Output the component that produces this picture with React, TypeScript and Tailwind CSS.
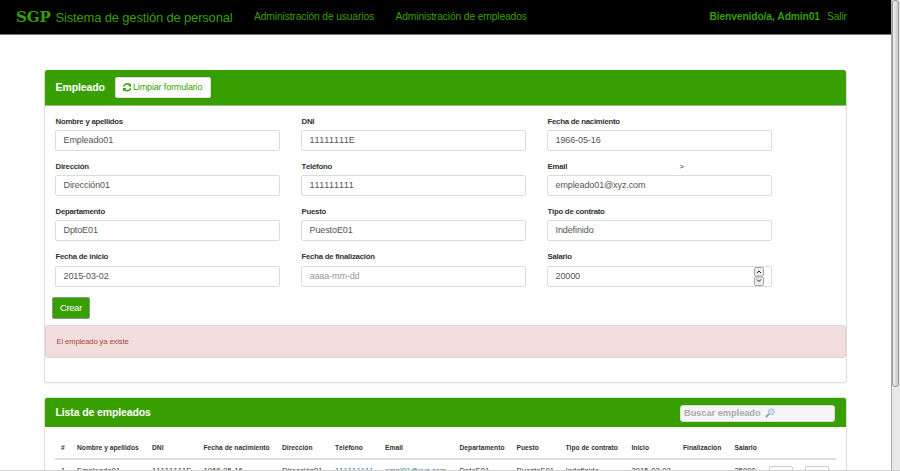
import React from "react";

type FieldProps = {
  label: string;
  value?: string;
  placeholder?: string;
  note?: string;
  stepper?: boolean;
  tall?: boolean;
};

function Stepper() {
  return (
    <svg className="mr-[7px] ml-auto shrink-0" width="10" height="19" viewBox="0 0 10 19" fill="none">
      <rect x="0.5" y="0.5" width="9" height="8.5" rx="1" fill="#ececec" stroke="#a6a6a6" />
      <rect x="0.5" y="10" width="9" height="8.5" rx="1" fill="#ececec" stroke="#a6a6a6" />
      <path d="m3 6 2-2 2 2M3 12.500l2 2 2-2" stroke="#222" />
    </svg>
  );
}

function Field({ label, value, placeholder, note, stepper, tall }: FieldProps) {
  return (
    <div className="w-[225px]">
      <div
        className={`flex items-center pt-px pl-[0.5px] text-[7.8px] leading-[17px] font-bold tracking-[-0.25px] text-[#333] ${tall ? "h-[19px] pb-px" : "h-[18px]"}`}
      >
        <span className="w-[132px]">{label}</span>
        {note && <span className="font-normal">{note}</span>}
      </div>
      <div className="flex h-[21px] items-center rounded-[2px] border border-[#dcdcdc] bg-white pl-[7.5px] text-[9px] leading-[19px] tracking-[-0.1px] text-[#555]">
        {value ? <span>{value}</span> : <span className="text-[#999]">{placeholder}</span>}
        {stepper && <Stepper />}
      </div>
    </div>
  );
}

const rows: FieldProps[][] = [
  [
    { label: "Nombre y apellidos", value: "Empleado01" },
    { label: "DNI", value: "11111111E" },
    { label: "Fecha de nacimiento", value: "1966-05-16" },
  ],
  [
    { label: "Dirección", value: "Dirección01" },
    { label: "Teléfono", value: "111111111" },
    { label: "Email", value: "empleado01@xyz.com", note: ">" },
  ],
  [
    { label: "Departamento", value: "DptoE01" },
    { label: "Puesto", value: "PuestoE01" },
    { label: "Tipo de contrato", value: "Indefinido" },
  ],
  [
    { label: "Fecha de inicio", value: "2015-03-02", tall: true },
    { label: "Fecha de finalización", placeholder: "aaaa-mm-dd", tall: true },
    { label: "Salario", value: "20000", stepper: true, tall: true },
  ],
];

const columns = [
  { head: "#", cell: "1", width: "w-[16px]" },
  { head: "Nombre y apellidos", cell: "Empleado01", width: "w-[75px]" },
  { head: "DNI", cell: "11111111E", width: "w-[51.5px]" },
  { head: "Fecha de nacimiento", cell: "1966-05-16", width: "w-[78.5px]" },
  { head: "Dirección", cell: "Dirección01", width: "w-[53px]" },
  { head: "Teléfono", cell: "111111111", width: "w-[50px]", link: true },
  { head: "Email", cell: "empl01@xyz.com", width: "w-[74.5px]", link: true },
  { head: "Departamento", cell: "DptoE01", width: "w-[57px]" },
  { head: "Puesto", cell: "PuestoE01", width: "w-[49px]" },
  { head: "Tipo de contrato", cell: "Indefinido", width: "w-[66px]" },
  { head: "Inicio", cell: "2015-03-02", width: "w-[51.5px]" },
  { head: "Finalización", cell: "", width: "w-[51.5px]" },
  { head: "Salario", cell: "25000", width: "w-[34px]" },
];

function Refresh() {
  return (
    <svg className="shrink-0" width="8.5" height="8.5" viewBox="0 0 1536 1536" fill="#389f00">
      <path d="M1511 928q0 5-1 7-64 268-268 434.500t-478 166.500q-146 0-282.500-55t-243.500-157l-129 129q-19 19-45 19t-45-19-19-45v-448q0-26 19-45t45-19h448q26 0 45 19t19 45-19 45l-137 137q71 66 161 102t187 36q134 0 250-65t186-179q11-17 53-117 8-23 30-23h192q13 0 22.500 9.500t9.500 22.500zm25-800v448q0 26-19 45t-45 19h-448q-26 0-45-19t-19-45 19-45l138-138q-148-137-349-137-134 0-250 65t-186 179q-11 17-53 117-8 23-30 23h-199q-13 0-22.500-9.500t-9.500-22.500v-7q65-268 270-434.500t480-166.500q146 0 284 55.500t245 156.500l130-129q19-19 45-19t45 19 19 45z" />
    </svg>
  );
}

export default function App() {
  return (
    <div className="flex h-[471px] w-[900px] overflow-hidden border-b border-[#d0d0d0] bg-white font-['Liberation_Sans',Arial,sans-serif] whitespace-nowrap [font-kerning:none]">
      <div className="w-[891px] shrink-0">
        <header className="flex h-[35px] items-center border-b border-[#777] bg-black pl-4 text-[10.3px] tracking-[-0.14px] text-[#389f00]">
          <span className="w-[39.5px] font-['DejaVu_Serif',serif] text-[15px] leading-none font-bold tracking-[-0.1px]">SGP</span>
          <span className="w-[198.5px] pt-px text-[13px] tracking-[-0.17px]">Sistema de gestión de personal</span>
          <span className="w-[141.5px] pb-px">Administración de usuarios</span>
          <span className="w-[314px] pb-px">Administración de empleados</span>
          <b className="w-[117.5px] pb-px">Bienvenido/a, Admin01</b>
          <span className="pb-px">Salir</span>
        </header>

        <main className="flex flex-col gap-[14px] pt-[35px] pl-[44px]">
          <section className="h-[313px] w-[803px] rounded-[3px] border border-[#ddd] shadow-[0_1px_1px_rgba(0,0,0,0.05)]">
            <div className="-mx-px -mt-px flex h-[36px] items-center rounded-t-[3px] border-x border-b border-x-[#ddd] border-b-[#92c47d] bg-[#389f00] bg-clip-padding pl-[10.5px]">
              <h2 className="w-[59px] text-[10.5px] font-bold tracking-[-0.1px] text-white">Empleado</h2>
              <button className="flex h-[21px] w-[96px] items-center gap-[2px] rounded-[2px] border border-[#ddd] bg-white pl-[7px] text-[9px] tracking-[-0.15px] text-[#389f00]">
                <Refresh />
                Limpiar formulario
              </button>
            </div>
            <div className="flex flex-col gap-[6px] pt-[6px] pl-[10px]">
              {rows.map((row, i) => (
                <div key={i} className="flex gap-[21px]">
                  {row.map((f) => (
                    <Field key={f.label} {...f} />
                  ))}
                </div>
              ))}
            </div>
            <button className="mt-[10px] ml-[7px] flex h-[22px] w-[38px] items-center justify-center rounded-[2px] border border-[#8a9a82] bg-[#389f00] pt-px text-[9.3px] tracking-[-0.2px] text-white">
              Crear
            </button>
            <div className="mt-[6px] flex h-[33px] items-center rounded-[3px] border border-[#ebccd1] bg-[#f2dede] pl-[10.5px] text-[7.6px] tracking-[-0.1px] text-[#a94442]">
              El empleado ya existe
            </div>
          </section>

          <section className="h-[90px] w-[803px] rounded-t-[3px] border border-[#ddd]">
            <div className="flex h-[29px] items-center justify-between rounded-t-[2px] bg-[#389f00] pr-[11px] pl-[10.5px]">
              <h2 className="text-[10.5px] font-bold tracking-[-0.12px] text-white">Lista de empleados</h2>
              <div className="mt-[2px] flex h-[17px] w-[155px] items-center rounded-[3px] border border-[#ddd] bg-[#f5f5f5] pt-px pl-[3px] text-[9.2px] font-bold text-[#aaa]">
                <span className="w-[81px]">Buscar empleado</span>
                <svg className="-mt-[2px]" width="10" height="10" viewBox="0 0 10 10" fill="none">
                  <path d="M.8 9.200 4 6" stroke="#999" strokeWidth="1.8" />
                  <circle cx="6.300" cy="3.700" r="2.900" fill="#cfe3f1" stroke="#a9bac8" />
                </svg>
              </div>
            </div>
            <div className="mx-[10px] mt-[8px] text-[6.700px] text-[#333]">
              <div className="flex h-[25px] items-center border-b-2 border-[#ddd] pt-[3px] pl-[6px] font-bold">
                {columns.map((c) => (
                  <span key={c.head} className={`${c.width} shrink-0`}>
                    {c.head}
                  </span>
                ))}
              </div>
              <div className="flex h-[22px] items-center pl-[6px] text-[7.700px]">
                {columns.map((c) => (
                  <span key={c.head} className={`${c.width} shrink-0 ${c.link ? "text-[#337ab7]" : ""}`}>
                    {c.cell}
                  </span>
                ))}
                <span className="mt-[7px] mr-[12px] h-[18px] w-[24px] shrink-0 rounded-[2px] border border-[#ccc]" />
                <span className="mt-[7px] flex h-[18px] w-[24px] shrink-0 justify-center rounded-[2px] border border-[#ccc] pt-[3px]">
                  <Refresh />
                </span>
              </div>
            </div>
          </section>
        </main>
      </div>
      <div className="h-[471px] w-[9px] border-l border-[#aaa] bg-[#e8e8e8]">
        <div className="h-[387px] w-[7px] rounded-[3px] border border-[#999] bg-gradient-to-r from-[#f2f2f2] to-[#c9c9c9]" />
      </div>
    </div>
  );
}
